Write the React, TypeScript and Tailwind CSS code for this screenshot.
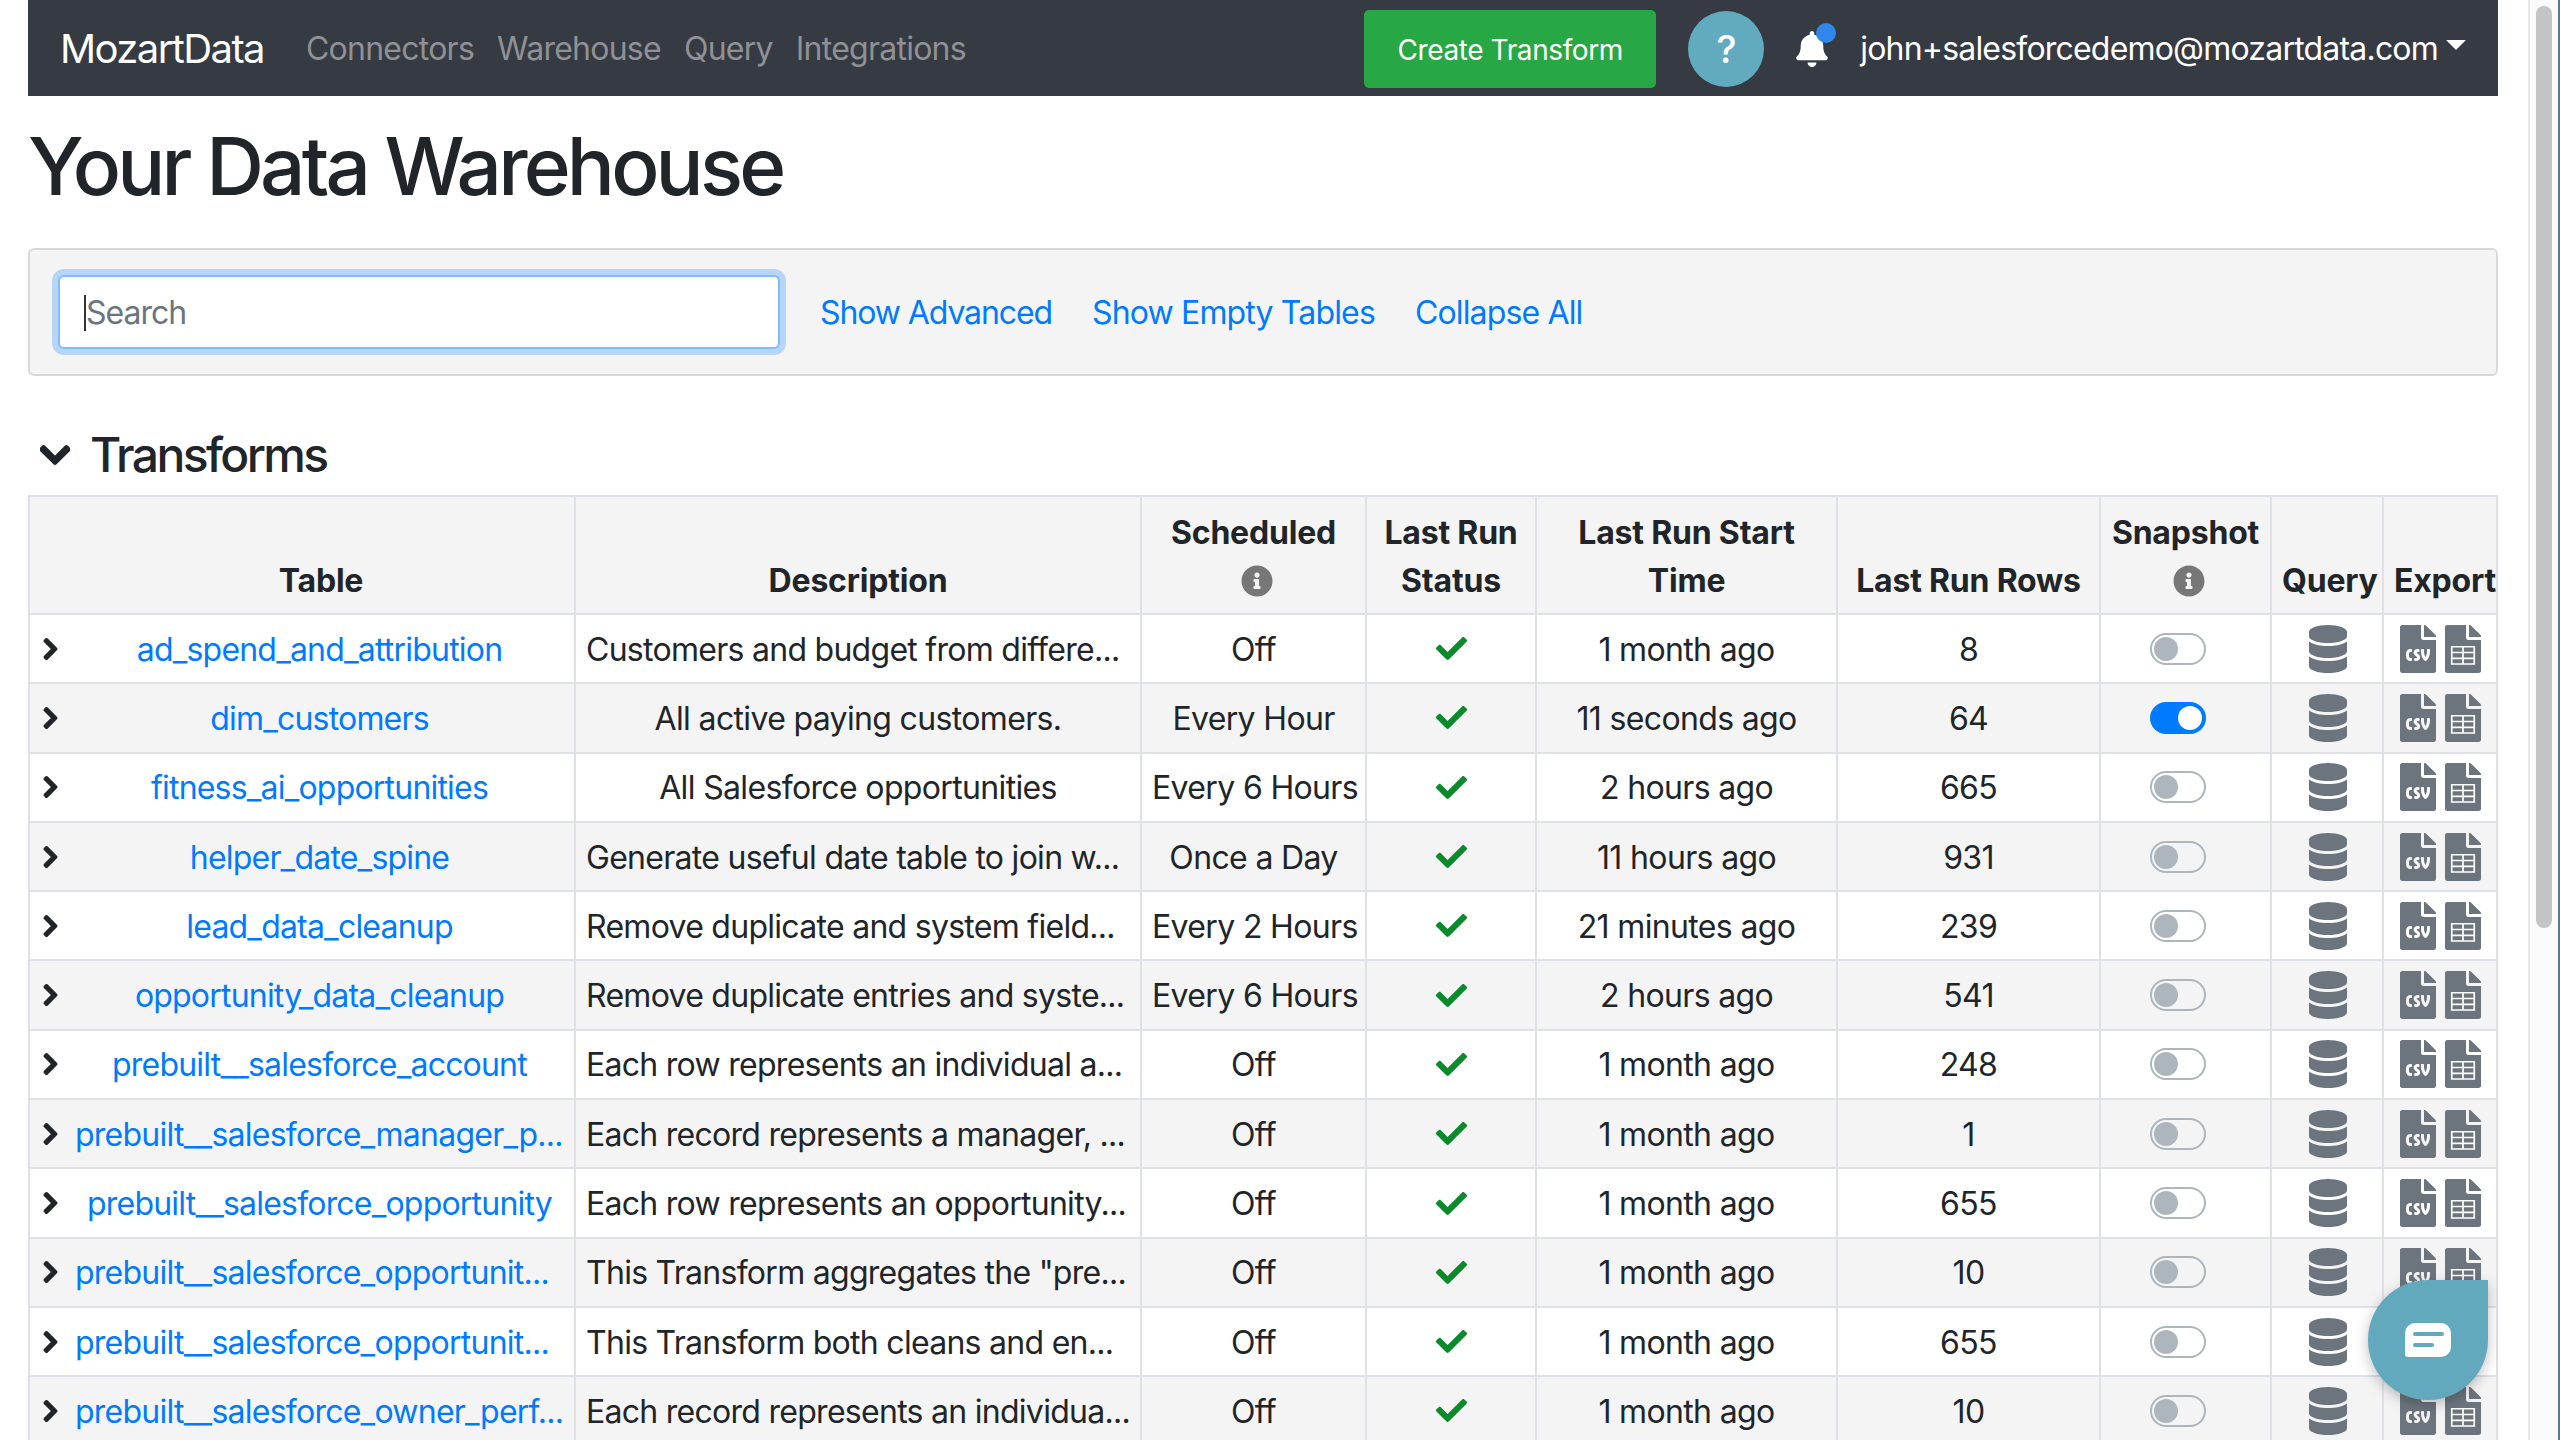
import { FaBell, FaCheck, FaChevronDown, FaChevronRight, FaFileCsv, FaInfoCircle } from 'react-icons/fa'

const NAV_LINKS = ['Connectors', 'Warehouse', 'Query', 'Integrations']

const ROWS = [
  { name: 'ad_spend_and_attribution', desc: 'Customers and budget from differe...', sched: 'Off', time: '1 month ago', rows: '8' },
  { name: 'dim_customers', desc: 'All active paying customers.', sched: 'Every Hour', time: '11 seconds ago', rows: '64', snapshot: true },
  { name: 'fitness_ai_opportunities', desc: 'All Salesforce opportunities', sched: 'Every 6 Hours', time: '2 hours ago', rows: '665' },
  { name: 'helper_date_spine', desc: 'Generate useful date table to join w...', sched: 'Once a Day', time: '11 hours ago', rows: '931' },
  { name: 'lead_data_cleanup', desc: 'Remove duplicate and system field...', sched: 'Every 2 Hours', time: '21 minutes ago', rows: '239' },
  { name: 'opportunity_data_cleanup', desc: 'Remove duplicate entries and syste...', sched: 'Every 6 Hours', time: '2 hours ago', rows: '541' },
  { name: 'prebuilt__salesforce_account', desc: 'Each row represents an individual a...', sched: 'Off', time: '1 month ago', rows: '248' },
  { name: 'prebuilt__salesforce_manager_p...', desc: 'Each record represents a manager, ...', sched: 'Off', time: '1 month ago', rows: '1' },
  { name: 'prebuilt__salesforce_opportunity', desc: 'Each row represents an opportunity...', sched: 'Off', time: '1 month ago', rows: '655' },
  { name: 'prebuilt__salesforce_opportunit...', desc: 'This Transform aggregates the "pre...', sched: 'Off', time: '1 month ago', rows: '10' },
  { name: 'prebuilt__salesforce_opportunit...', desc: 'This Transform both cleans and en...', sched: 'Off', time: '1 month ago', rows: '655' },
  { name: 'prebuilt__salesforce_owner_perf...', desc: 'Each record represents an individua...', sched: 'Off', time: '1 month ago', rows: '10' },
]

const TH = 'border-2 border-[#dee2e6] pb-[8px] pt-[12px] align-bottom font-bold text-center tracking-[-0.2px]'
const TD = 'border-2 border-[#dee2e6] px-[10px] py-0 text-center whitespace-nowrap'
const TEXT_TD = TD + ' pt-[2px]'

function DatabaseIcon() {
  return (
    <svg viewBox="0 0 448 512" preserveAspectRatio="none" className="ml-[2px] h-[48px] w-[38px] fill-[#6c757d]">
      <path d="M448 73.143v45.714C448 159.143 347.667 192 224 192S0 159.143 0 118.857V73.143C0 32.857 100.333 0 224 0s224 32.857 224 73.143zM448 176v102.857C448 319.143 347.667 352 224 352S0 319.143 0 278.857V176c48.125 33.143 136.208 48.572 224 48.572S399.874 209.143 448 176zm0 160v102.857C448 479.143 347.667 512 224 512S0 479.143 0 438.857V336c48.125 33.143 136.208 48.572 224 48.572S399.874 369.143 448 336z" />
    </svg>
  )
}

function FileTableIcon() {
  return (
    <svg viewBox="0 0 384 512" className="h-[48px] w-[36px]">
      <path
        className="fill-[#6c757d]"
        d="M224 136V0H24C10.7 0 0 10.7 0 24v464c0 13.3 10.7 24 24 24h336c13.3 0 24-10.7 24-24V160H248c-13.2 0-24-10.8-24-24zm160-14.1v6.1H256V0h6.1c6.4 0 12.5 2.5 17 7l97.9 98c4.5 4.5 7 10.6 7 16.9z"
      />
      <path
        fill="none"
        stroke="#fff"
        strokeWidth="18"
        d="M72 232h240v184H72zM72 293h240M72 355h240M192 232v184"
      />
    </svg>
  )
}

function Toggle({ on }: { on?: boolean }) {
  return (
    <div
      className={
        on
          ? 'ml-[39px] flex h-[32px] w-[56px] items-center justify-end rounded-full bg-[#007bff] pr-[4px]'
          : 'ml-[39px] flex h-[32px] w-[56px] items-center rounded-full border-2 border-[#adb5bd] pl-[2px]'
      }
    >
      <div className={on ? 'h-[24px] w-[24px] rounded-full bg-white' : 'h-[24px] w-[24px] rounded-full bg-[#adb5bd]'} />
    </div>
  )
}

function Navbar() {
  return (
    <nav className="flex h-[96px] items-center bg-[#363a42] pl-[32px] pr-[32px] pt-[2px] text-[32px] text-white">
      <span className="mr-[42px] text-[40px] tracking-[-1.6px]">MozartData</span>
      <div className="flex gap-[23px] tracking-[-0.75px] text-[#8f9195]">
        {NAV_LINKS.map((l) => (
          <span key={l}>{l}</span>
        ))}
      </div>
      <button className="ml-auto h-[78px] w-[292px] rounded-[5px] bg-[#28a745] pt-[2px] text-[28px] tracking-[-0.4px] text-white">
        Create Transform
      </button>
      <div className="ml-[32px] flex h-[76px] w-[76px] items-center justify-center rounded-full bg-[#62abbe] text-[38px] font-medium">
        ?
      </div>
      <div className="relative ml-[32px] mr-[32px]">
        <FaBell className="h-[36px] w-[32px]" />
        <span className="absolute right-[-8px] top-[-8px] h-[20px] w-[20px] rounded-full bg-[#2f86eb]" />
      </div>
      <span className="tracking-[-0.8px]">john+salesforcedemo@mozartdata.com</span>
      <span className="ml-[8px] mb-[8px] h-0 w-0 border-x-[10px] border-t-[10px] border-x-transparent border-t-white" />
    </nav>
  )
}

export default function App() {
  return (
    <div className="relative flex h-screen overflow-hidden bg-white font-['Inter',sans-serif] text-[32px] leading-[48px] tracking-[-0.65px] text-[#212529]">
      <main className="w-[2528px] shrink-0 pl-[28px] pr-[30px]">
        <Navbar />
        <h1 className="mt-[22px] text-[80px] font-medium leading-[96px] tracking-[-3.85px]">Your Data Warehouse</h1>
        <div className="mt-[34px] flex h-[128px] items-center rounded-[6px] border-2 border-[#d8d8d8] bg-[#f4f4f4] pl-[28px]">
          <div className="flex h-[74px] w-[722px] items-center rounded-[6px] border-2 border-[#80bdff] bg-white pl-[24px] tracking-[-1px] text-[#6c757d] shadow-[0_0_0_6px_rgba(0,123,255,0.25)]">
            <span className="mt-[2px] border-l-2 border-[#333] leading-[36px]">Search</span>
          </div>
          <div className="ml-[40px] mt-[2px] flex gap-[40px] tracking-[-0.85px] text-[#007bff]">
            <span className="tracking-[-1.1px]">Show Advanced</span>
            <span>Show Empty Tables</span>
            <span>Collapse All</span>
          </div>
        </div>
        <div className="mt-[38px] flex h-[81px] items-center pl-[12px]">
          <FaChevronDown className="h-[34px] w-[30px] [stroke-width:30]" />
          <h2 className="ml-[20px] text-[48px] font-medium tracking-[-2.6px]">Transforms</h2>
        </div>
        <table className="w-[2468px] table-fixed border-collapse">
          <colgroup>
            <col className="w-[546px]" />
            <col className="w-[566px]" />
            <col className="w-[225px]" />
            <col className="w-[170px]" />
            <col className="w-[301px]" />
            <col className="w-[263px]" />
            <col className="w-[171px]" />
            <col className="w-[112px]" />
            <col className="w-[114px]" />
          </colgroup>
          <thead className="bg-[#f4f4f4]">
            <tr>
              <th className={TH + ' pl-[48px] pr-[10px]'}>Table</th>
              <th className={TH + ' px-[10px]'}>Description</th>
              <th className={TH + ' px-[10px]'}>
                Scheduled
                <FaInfoCircle className="mx-auto my-[8px] h-[32px] w-[32px] translate-x-[3px] text-[#777]" />
              </th>
              <th className={TH + ' px-[10px]'}>Last Run Status</th>
              <th className={TH + ' px-[10px]'}>Last Run Start Time</th>
              <th className={TH + ' px-[10px]'}>Last Run Rows</th>
              <th className={TH + ' px-[10px]'}>
                Snapshot
                <FaInfoCircle className="mx-auto my-[8px] h-[32px] w-[32px] translate-x-[3px] text-[#777]" />
              </th>
              <th className={TH + ' px-[10px]'}>Query</th>
              <th className={TH + ' whitespace-nowrap px-[10px]'}>Export</th>
            </tr>
          </thead>
          <tbody>
            {ROWS.map((r, i) => (
              <tr key={r.name + i} className={i % 2 === 1 ? 'h-[69.3px] bg-[#f4f4f4]' : 'h-[69.3px]'}>
                <td className={TD}>
                  <div className="flex items-center">
                    <FaChevronRight className="ml-[3px] mr-[17px] h-[24px] w-[15px] shrink-0 [stroke-width:30]" />
                    <span
                      className={
                        r.name.endsWith('...')
                          ? 'flex-1 pt-[2px] text-left tracking-[-0.75px] text-[#007bff]'
                          : 'flex-1 pt-[2px] tracking-[-0.8px] text-[#007bff]'
                      }
                    >
                      {r.name}
                    </span>
                  </div>
                </td>
                <td className={r.desc.endsWith('...') ? TEXT_TD + ' !text-left tracking-[-0.72px]' : TEXT_TD}>{r.desc}</td>
                <td className={TEXT_TD}>{r.sched}</td>
                <td className={TD}>
                  <FaCheck className="mx-auto h-[31px] w-[31px] text-[#0a8a2a]" />
                </td>
                <td className={TEXT_TD}>{r.time}</td>
                <td className={TEXT_TD}>{r.rows}</td>
                <td className={TD}>
                  <Toggle on={r.snapshot} />
                </td>
                <td className={TD}>
                  <div className="flex justify-center">
                    <DatabaseIcon />
                  </div>
                </td>
                <td className={TD}>
                  <div className="flex justify-center gap-[9px]">
                    <FaFileCsv className="h-[48px] w-[36px] text-[#6c757d]" />
                    <FileTableIcon />
                  </div>
                </td>
              </tr>
            ))}
          </tbody>
        </table>
      </main>
      <aside className="flex h-full w-[32px] shrink-0">
        <div className="h-full w-[30px] border-l-2 border-[#e8e8e8] bg-[#fafafa] pl-[6px] pt-[6px]">
          <div className="h-[922px] w-[16px] rounded-full bg-[#c4c4c4]" />
        </div>
        <div className="h-full w-[2px] bg-[#5a7a92]" />
      </aside>
      <div className="absolute left-[2368px] top-[1280px] flex h-[120px] w-[120px] items-center justify-center rounded-full rounded-tr-[16px] bg-[#62a9bd] shadow-[0_4px_14px_rgba(0,0,0,0.25)]">
        <svg viewBox="0 0 46 34" className="h-[34px] w-[46px]">
          <path fill="#fff" d="M10 0h26a10 10 0 0 1 10 10v14a10 10 0 0 1-10 10H3a3 3 0 0 1-3-3V10A10 10 0 0 1 10 0z" />
          <rect x="8" y="9" width="31" height="4" rx="2" fill="#62a9bd" />
          <rect x="8" y="20" width="21" height="4" rx="2" fill="#62a9bd" />
        </svg>
      </div>
    </div>
  )
}
